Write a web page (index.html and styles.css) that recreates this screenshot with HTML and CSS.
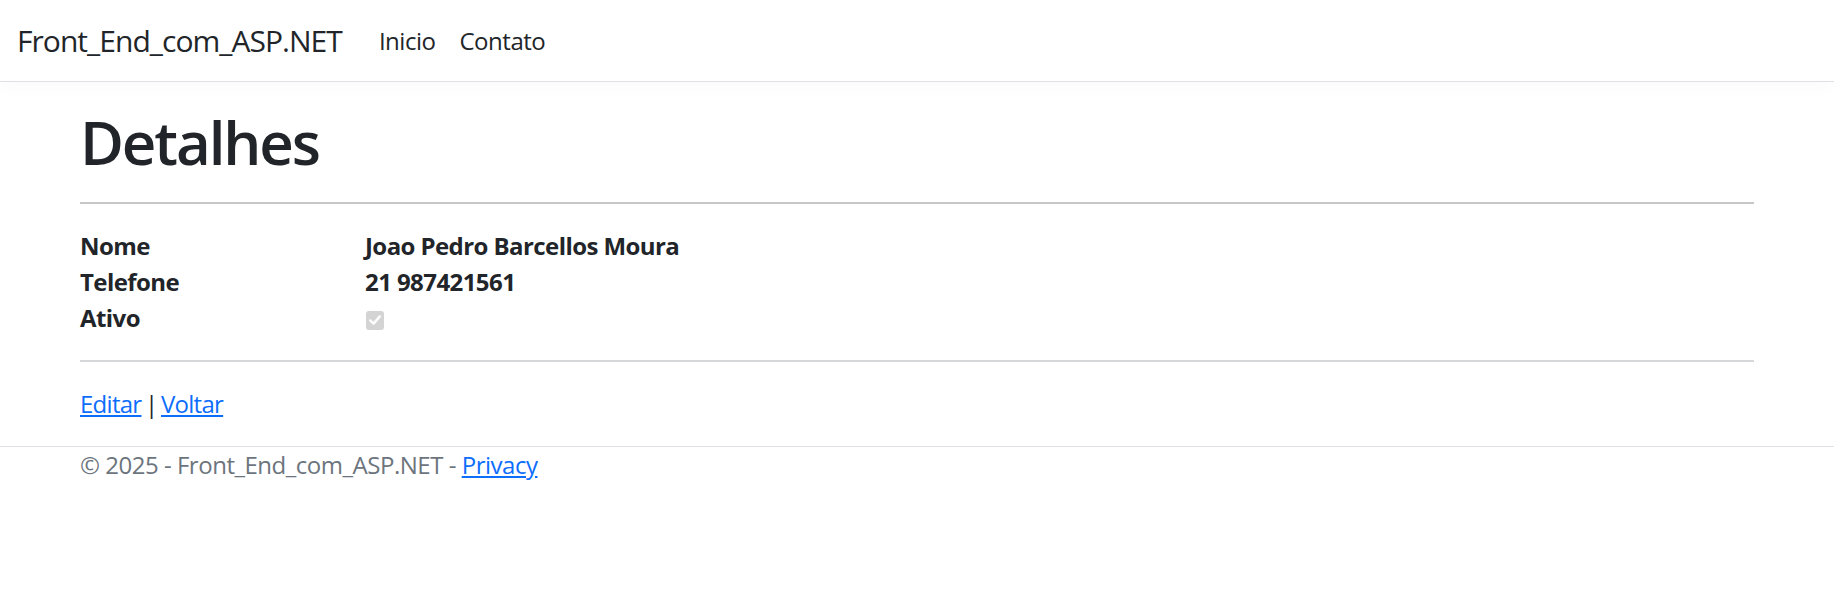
FILE: index.html
```html
<!DOCTYPE html>
<html lang="pt-br">
<head>
<meta charset="utf-8">
<title>Detalhes - Front_End_com_ASP.NET</title>
<link rel="stylesheet" href="styles.css">
</head>
<body>
<header class="navbar">
  <div class="navbar-inner">
    <a class="brand" href="#">Front_End_com_ASP.NET</a>
    <nav class="nav">
      <a class="nav-link" href="#">Inicio</a>
      <a class="nav-link" href="#">Contato</a>
    </nav>
  </div>
</header>
<div class="container">
  <main class="main">
    <h1 class="title">Detalhes</h1>
    <hr class="rule">
    <dl class="details">
      <dt>Nome</dt>
      <dd>Joao Pedro Barcellos Moura</dd>
      <dt>Telefone</dt>
      <dd>21 987421561</dd>
      <dt>Ativo</dt>
      <dd><span class="check" role="checkbox" aria-checked="true" aria-disabled="true"><svg viewBox="0 0 18 18" width="18" height="18"><path d="M4.2 9.4 L7.6 12.6 L13.8 5.4" fill="none" stroke="#ffffff" stroke-width="2.4" stroke-linecap="round" stroke-linejoin="round"/></svg></span></dd>
    </dl>
    <hr class="rule rule-light">
    <div class="actions">
      <a href="#">Editar</a> | <a href="#">Voltar</a>
    </div>
  </main>
</div>
<footer class="footer">
  <div class="container footer-inner">
    &copy; 2025 - Front_End_com_ASP.NET - <a href="#">Privacy</a>
  </div>
</footer>
</body>
</html>
```
FILE: styles.css
```css
html, body {
  margin: 0;
  padding: 0;
  background: #ffffff;
}

body {
  font-family: "Open Sans", "Noto Sans", "Liberation Sans", sans-serif;
  font-size: 24px;
  line-height: 1.5;
  letter-spacing: -0.02em;
  color: #212529;
}

a {
  color: #0d6efd;
  text-decoration: underline;
  text-underline-offset: 2px;
}

.navbar {
  border-bottom: 1px solid #dee2e6;
  box-shadow: 0 6px 18px rgba(0, 0, 0, 0.02);
}

.navbar-inner {
  display: flex;
  align-items: center;
  height: 81px;
  padding: 0 18px 0 17px;
}

.brand {
  font-size: 30px;
  letter-spacing: -0.032em;
  color: #212529;
  text-decoration: none;
  margin-right: 25px;
  line-height: 45px;
}

.nav {
  display: flex;
}

.nav-link {
  color: #212529;
  text-decoration: none;
  padding: 0 12px;
  font-size: 24px;
}

.container {
  max-width: 1674px;
  margin: 0 auto;
  padding: 0 18px;
}

.main {
  padding-top: 24px;
  padding-bottom: 24px;
}

.title {
  font-size: 60px;
  font-weight: 600;
  letter-spacing: -0.035em;
  line-height: 1.2;
  margin: 0 0 12px;
}

.rule {
  border: 0;
  border-top: 2px solid #c6c7c8;
  margin: 24px 0;
}

.rule-light {
  border-top-color: #d6d7d8;
}

.details {
  display: grid;
  grid-template-columns: 285px 1fr;
  margin: 0 0 24px;
  font-weight: 700;
  letter-spacing: -0.024em;
}

.details dt,
.details dd {
  margin: 0;
  height: 36px;
}

.check {
  display: inline-block;
  width: 18px;
  height: 19px;
  border-radius: 3px;
  background: #d4d4d4;
  vertical-align: -3px;
  margin-left: 1px;
}

.check svg {
  display: block;
}

.actions {
  line-height: 36px;
  letter-spacing: -0.03em;
  word-spacing: -2px;
}

.footer {
  border-top: 1px solid #dee2e6;
  color: #6c757d;
  white-space: nowrap;
}

.footer-inner {
  line-height: 36px;
}
```
